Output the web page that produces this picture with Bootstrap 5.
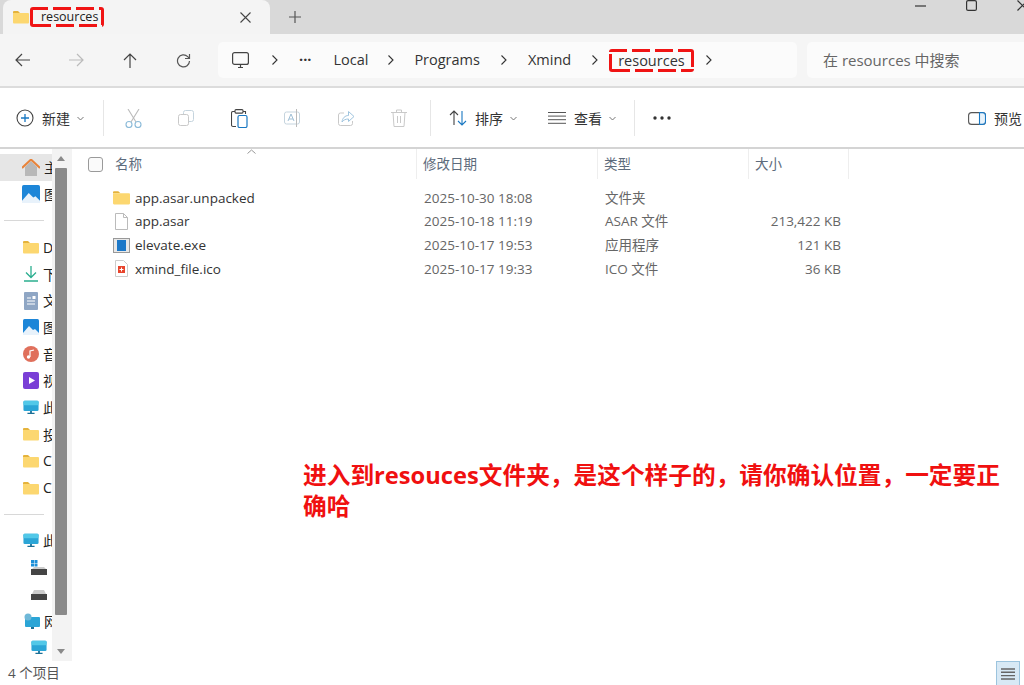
<!DOCTYPE html>
<html lang="zh">
<head>
  <meta charset="UTF-8">
  <title>resources</title>
  <link href="https://cdn.jsdelivr.net/npm/bootstrap@5.3.0/dist/css/bootstrap.min.css" rel="stylesheet">
  <style>
    html, body { height: 685px; overflow: hidden; }
    body { font-family: "Open Sans", "Noto Sans CJK SC", sans-serif; font-size: 13.5px; color: #333; background: #fff; width: 1024px; position: relative; }
    svg { display: block; flex: none; }
    .red-dash {
      background:
        repeating-linear-gradient(90deg, #f01414 0 18px, transparent 18px 23px) top left / 100% 3px no-repeat,
        repeating-linear-gradient(90deg, #f01414 0 18px, transparent 18px 23px) bottom left 3px / 100% 3px no-repeat,
        repeating-linear-gradient(0deg, #f01414 0 18px, transparent 18px 23px) top left / 3px 100% no-repeat,
        repeating-linear-gradient(180deg, #f01414 0 18px, transparent 18px 23px) top right / 3px 100% no-repeat;
      border-radius: 3px;
    }
    .tab-strip { height: 34px; background: #d9d9d9; padding-left: 3px; }
    .file-tab { width: 267px; height: 34px; background: #f4f4f4; border-radius: 8px 8px 0 0; padding: 0 19px 0 10px; }
    .tab-label { font-size: 12.5px; color: #222; height: 20px; line-height: 20px; padding: 0 6px 0 11px; margin-left: 1px; }
    .plus-btn { margin-left: 19px; }
    .win-btns { margin-left: auto; gap: 40px; height: 11px; margin-right: -4px; }
    .addr-row { height: 54px; background: #f5f5f5; border-bottom: 2px solid #dcdcdc; padding-left: 15px; }
    .nav-btns { gap: 39px; width: 203px; flex: none; }
    .addr-box { width: 579px; height: 36px; flex: none; background: #fbfbfb; border-radius: 5px; padding-left: 14px; font-size: 14.5px; color: #333; }
    .crumb-gap { margin: 0 21px; }
    .crumb-first { margin: 0 21px 0 23px; }
    .crumb-tight { margin: 0 20px; }
    .dots-txt { margin-right: 22px; }
    .red-crumb { padding: 0 9px; line-height: 23px; height: 23px; margin-left: -10px; margin-right: -9px; }
    .search-box { width: 217px; height: 36px; flex: none; margin-left: 10px; background: #fbfbfb; border-radius: 5px 0 0 5px; padding-left: 16px; font-size: 15px; color: #666; }
    .tool-row { height: 61px; background: #fff; border-bottom: 2px solid #d4d4d4; padding: 1px 0 0 16px; }
    .tool-txt { font-size: 14px; color: #333; }
    .tool-sep { width: 1px; height: 36px; background: #e6e6e6; }
    .muted-tools { gap: 36px; padding: 0 23px 0 21px; }
    .chev { margin-left: 7px; }
    .new-btn { width: 87px; }
    .sort-btn { width: 84px; margin-left: 18px; }
    .view-menu { width: 86px; margin-left: 15px; }
    .more-btn { margin-left: 18px; }
    .preview-btn { margin-left: auto; width: 56px; overflow: hidden; white-space: nowrap; }
    .body-row { height: 512px; }
    .side-wrap { width: 73px; background: #fff; }
    .side-list { width: 52px; overflow: hidden; padding-top: 5px; }
    .side-item { height: 26.7px; padding-left: 22px; white-space: nowrap; font-size: 14px; color: #222; gap: 4px; }
    .side-item.on { background: #e6e6e6; }
    .side-item.sub { padding-left: 31px; }
    .side-item.indent { padding-left: 23px; }
    .side-line { height: 26.7px; padding-left: 4px; }
    .side-line div { width: 40px; height: 1px; background: #d8d8d8; }
    .bar-track { width: 20px; background: #f3f3f3; padding: 0 5px 0 3px; }
    .bar-thumb { background: #8a8a8a; height: 447px; border-radius: 1px; }
    .bar-arrow { height: 19px; }
    .files { flex: 1; position: relative; }
    .col-name { width: 344px; }
    .col-date { width: 181px; }
    .col-type { width: 151px; }
    .col-size { width: 100px; }
    .head-row { height: 30px; color: #5d6b7c; font-size: 13.5px; }
    .head-row > div { height: 30px; padding-left: 6px; border-right: 1px solid #eee; line-height: 31px; }
    .head-row > .col-name { padding-left: 15px; gap: 12px; display: flex; align-items: center; }
    .check-box { width: 15px; height: 15px; border: 1px solid #9a9a9a; border-radius: 3px; background: #fafafa; }
    .sort-mark { position: absolute; left: 174px; top: 0; }
    .file-list { padding-top: 7px; }
    .file-row { height: 23.7px; color: #666; }
    .file-row .col-name { color: #333; padding-left: 40px; gap: 5px; }
    .file-row .col-date { padding-left: 7px; }
    .file-row .col-type { padding-left: 7px; }
    .file-row .col-size { text-align: right; padding-right: 8px; }
    .note { position: absolute; left: 303px; top: 460px; width: 705px; color: #f01010; font-weight: 700; font-size: 23.7px; line-height: 31px; }
    .status-row { height: 25px; padding-left: 8px; color: #555; font-size: 13.5px; }
    .view-btn { margin-left: auto; margin-right: 4px; width: 24px; height: 26px; background: #d8e9f5; border: 1px solid #9cc4de; }
  </style>
</head>
<body>

<svg width="0" height="0" class="position-absolute">
  <defs>
    <symbol id="folder" viewBox="0 0 16 14">
      <path d="M0 2a1 1 0 0 1 1-1h4l2 2H0z" fill="#e5b33c"/>
      <path d="M0 3h15a1 1 0 0 1 1 1v8.500a1 1 0 0 1-1 1H1a1 1 0 0 1-1-1z" fill="#fcd770"/>
    </symbol>
    <symbol id="monitor" viewBox="0 0 18 16">
      <rect x="0.500" y="0.500" width="17" height="11.500" rx="1.500" fill="#2ba5d6"/>
      <rect x="0.500" y="0.500" width="17" height="5" rx="1.500" fill="#52c8e8"/>
      <path d="M8 12h2v2H8zM5 14h8v1.200H5z" fill="#1b6f96"/>
    </symbol>
    <symbol id="picture" viewBox="0 0 16 16">
      <rect width="16" height="16" rx="1.500" fill="#1d86d8"/>
      <path d="M0 14l6-7 4 4 2-1 4 4v2H0z" fill="#e8f2fb"/>
    </symbol>
  </defs>
</svg>

<div class="tab-strip d-flex align-items-start">
  <div class="file-tab d-flex align-items-center">
    <svg width="16" height="14"><use href="#folder"/></svg>
    <span class="tab-label red-dash">resources</span>
    <svg class="ms-auto" width="11" height="11" viewBox="0 0 11 11"><path d="M.5.500l10 10M10.500.500l-10 10" stroke="#444" stroke-width="1.100"/></svg>
  </div>
  <svg class="plus-btn align-self-center" width="12" height="12" viewBox="0 0 12 12"><path d="M6 0v12M0 6h12" stroke="#555" stroke-width="1.200"/></svg>
  <div class="win-btns d-flex align-items-center">
    <svg width="11" height="2" viewBox="0 0 11 2"><path d="M0 1h11" stroke="#333" stroke-width="1.200"/></svg>
    <svg width="11" height="11" viewBox="0 0 11 11"><rect x=".6" y=".6" width="9.800" height="9.800" rx="1.500" fill="none" stroke="#333" stroke-width="1.200"/></svg>
    <svg width="11" height="11" viewBox="0 0 11 11"><path d="M.5.500l10 10M10.500.500l-10 10" stroke="#333" stroke-width="1.200"/></svg>
  </div>
</div>

<div class="addr-row d-flex align-items-center">
  <div class="nav-btns d-flex align-items-center">
    <svg width="15" height="14" viewBox="0 0 15 14"><path d="M15 7H1M7 1L1 7l6 6" fill="none" stroke="#444" stroke-width="1.200"/></svg>
    <svg width="15" height="14" viewBox="0 0 15 14"><path d="M0 7h14M8 1l6 6-6 6" fill="none" stroke="#bbb" stroke-width="1.200"/></svg>
    <svg width="14" height="15" viewBox="0 0 14 15"><path d="M7 15V1M1 7l6-6 6 6" fill="none" stroke="#444" stroke-width="1.200"/></svg>
    <svg width="15" height="15" viewBox="0 0 15 15"><path d="M13.500 8a6 6 0 1 1-1.800-4.400L13.500 5.500M13.500 1v4.500H9" fill="none" stroke="#555" stroke-width="1.200"/></svg>
  </div>
  <div class="addr-box d-flex align-items-center">
    <svg width="17" height="17" viewBox="0 0 17 17"><rect x=".6" y=".6" width="15.800" height="11.800" rx="2" fill="none" stroke="#444" stroke-width="1.200"/><path d="M6 15.500h5M8.500 12.500v3" stroke="#444" stroke-width="1.200"/></svg>
    <svg class="crumb-first" width="6" height="10" viewBox="0 0 6 10"><path d="M.5.500L5 5 .5 9.500" fill="none" stroke="#333" stroke-width="1.100"/></svg>
    <span class="dots-txt lh-1 fw-bold">···</span>
    <span>Local</span>
    <svg class="crumb-tight" width="6" height="10" viewBox="0 0 6 10"><path d="M.5.500L5 5 .5 9.500" fill="none" stroke="#333" stroke-width="1.100"/></svg>
    <span>Programs</span>
    <svg class="crumb-gap" width="6" height="10" viewBox="0 0 6 10"><path d="M.5.500L5 5 .5 9.500" fill="none" stroke="#333" stroke-width="1.100"/></svg>
    <span>Xmind</span>
    <svg class="crumb-gap" width="6" height="10" viewBox="0 0 6 10"><path d="M.5.500L5 5 .5 9.500" fill="none" stroke="#333" stroke-width="1.100"/></svg>
    <span class="red-crumb red-dash">resources</span>
    <svg class="crumb-gap" width="6" height="10" viewBox="0 0 6 10"><path d="M.5.500L5 5 .5 9.500" fill="none" stroke="#333" stroke-width="1.100"/></svg>
  </div>
  <div class="search-box d-flex align-items-center">在 resources 中搜索</div>
</div>

<div class="tool-row d-flex align-items-center">
  <div class="new-btn d-flex align-items-center">
    <svg width="18" height="18" viewBox="0 0 18 18"><circle cx="9" cy="9" r="8" fill="none" stroke="#444" stroke-width="1.100"/><path d="M9 5v8M5 9h8" stroke="#1a78c2" stroke-width="1.300"/></svg>
    <span class="tool-txt ms-2">新建</span>
    <svg class="chev" width="7" height="5" viewBox="0 0 7 5"><path d="M.5 1L3.500 4 6.500 1" fill="none" stroke="#777"/></svg>
  </div>
  <div class="tool-sep"></div>
  <div class="muted-tools d-flex align-items-center">
    <svg width="17" height="19" viewBox="0 0 17 19"><path d="M3 0l8 13M14 0L6 13" stroke="#bbb" stroke-width="1.100"/><circle cx="4" cy="15.500" r="3" fill="none" stroke="#8cbbd9" stroke-width="1.100"/><circle cx="13" cy="15.500" r="3" fill="none" stroke="#8cbbd9" stroke-width="1.100"/></svg>
    <svg width="17" height="16" viewBox="0 0 17 16"><rect x="5.500" y=".5" width="10" height="11" rx="2" fill="none" stroke="#c5d4de"/><rect x=".5" y="4.500" width="10" height="11" rx="2" fill="#fff" stroke="#c9c9c9"/></svg>
    <svg width="17" height="19" viewBox="0 0 17 19"><path d="M5 2.500H2a1.500 1.500 0 0 0-1.500 1.500v12A1.500 1.500 0 0 0 2 17.500h3" fill="none" stroke="#444" stroke-width="1.100"/><rect x="4" y=".6" width="8" height="3.500" rx="1" fill="#fff" stroke="#444" stroke-width="1.100"/><rect x="7" y="6.500" width="9" height="12" rx="1.500" fill="#fff" stroke="#1a78c2" stroke-width="1.200"/><path d="M12 2.500h2.500V5" fill="none" stroke="#444" stroke-width="1.100"/></svg>
    <svg width="18" height="18" viewBox="0 0 18 18"><rect x=".5" y="3" width="15" height="12" rx="2" fill="none" stroke="#c5d4de"/><path d="M4 12l3-7 3 7M5 10h4" fill="none" stroke="#9fbfd6"/><path d="M12.500 0v18" stroke="#bbb"/></svg>
    <svg width="17" height="15" viewBox="0 0 17 15"><path d="M6 2H2.500A2 2 0 0 0 .5 4v8.500a2 2 0 0 0 2 2h10a2 2 0 0 0 2-2V10" fill="none" stroke="#c9c9c9"/><path d="M10.500.5L16 5.500l-5.500 5V8C7.500 8 5.500 9 4 11c.5-4 3-6.500 6.500-6.500z" fill="none" stroke="#9fc4de"/></svg>
    <svg width="16" height="18" viewBox="0 0 16 18"><path d="M0 3.500h16M5.500 3.500V1h5v2.500M2 3.500l1 14h10l1-14M6.500 7v7M9.500 7v7" fill="none" stroke="#c9c9c9"/></svg>
  </div>
  <div class="tool-sep"></div>
  <div class="sort-btn d-flex align-items-center">
    <svg width="18" height="16" viewBox="0 0 18 16"><path d="M5 15V1M1 5l4-4 4 4" fill="none" stroke="#444" stroke-width="1.100"/><path d="M13 1v14M9 11l4 4 4-4" fill="none" stroke="#1a78c2" stroke-width="1.100"/></svg>
    <span class="tool-txt ms-2">排序</span>
    <svg class="chev" width="7" height="5" viewBox="0 0 7 5"><path d="M.5 1L3.500 4 6.500 1" fill="none" stroke="#777"/></svg>
  </div>
  <div class="view-menu d-flex align-items-center">
    <svg width="18" height="12" viewBox="0 0 18 12"><path d="M0 .5h18M0 4.100h18M0 7.700h18M0 11.300h18" stroke="#555"/></svg>
    <span class="tool-txt ms-2">查看</span>
    <svg class="chev" width="7" height="5" viewBox="0 0 7 5"><path d="M.5 1L3.500 4 6.500 1" fill="none" stroke="#777"/></svg>
  </div>
  <div class="tool-sep"></div>
  <svg class="more-btn" width="18" height="4" viewBox="0 0 18 4"><circle cx="2" cy="2" r="1.700" fill="#333"/><circle cx="9" cy="2" r="1.700" fill="#333"/><circle cx="16" cy="2" r="1.700" fill="#333"/></svg>
  <div class="preview-btn d-flex align-items-center">
    <svg width="18" height="13" viewBox="0 0 18 13"><rect x=".6" y=".6" width="16.800" height="11.800" rx="3" fill="none" stroke="#555" stroke-width="1.100"/><path d="M11.500.6h3a3 3 0 0 1 3 3v5.800a3 3 0 0 1-3 3h-3z" fill="#e8f3fb" stroke="#1a78c2" stroke-width="1.100"/></svg>
    <span class="tool-txt ms-2">预览</span>
  </div>
</div>

<div class="body-row d-flex">
  <div class="side-wrap d-flex flex-none">
    <div class="side-list">
      <div class="side-item on d-flex align-items-center"><svg width="18" height="17" viewBox="0 0 18 17"><path d="M3 8v9h12V8L9 2z" fill="#b8b8b8"/><path d="M0 9l9-8.500L18 9" fill="none" stroke="#e8833a" stroke-width="2"/></svg><span>主</span></div>
      <div class="side-item d-flex align-items-center"><svg width="18" height="18"><use href="#picture"/></svg><span>图</span></div>
      <div class="side-line d-flex align-items-center"><div></div></div>
      <div class="side-item indent d-flex align-items-center"><svg width="16" height="14"><use href="#folder"/></svg><span>D</span></div>
      <div class="side-item indent d-flex align-items-center"><svg width="16" height="16" viewBox="0 0 16 16"><path d="M8 0v11M3 6.500l5 5 5-5M1 15h14" fill="none" stroke="#2bae8f" stroke-width="1.300"/></svg><span>下</span></div>
      <div class="side-item indent d-flex align-items-center"><svg width="16" height="18" viewBox="0 0 14 18"><rect width="14" height="18" rx="1" fill="#8fa6c4"/><path d="M3 6h4M3 9h8M3 12h8" stroke="#fff"/><rect x="8.500" y="4" width="3" height="3" fill="#fff"/></svg><span>文</span></div>
      <div class="side-item indent d-flex align-items-center"><svg width="16" height="16"><use href="#picture"/></svg><span>图</span></div>
      <div class="side-item indent d-flex align-items-center"><svg width="16" height="16" viewBox="0 0 16 16"><circle cx="8" cy="8" r="8" fill="#e0705c"/><path d="M7 11V5l4-1" fill="none" stroke="#fff" stroke-width="1.200"/><circle cx="5.500" cy="11" r="1.700" fill="#fff"/></svg><span>音</span></div>
      <div class="side-item indent d-flex align-items-center"><svg width="16" height="17" viewBox="0 0 16 17"><rect width="16" height="17" rx="2" fill="#7a3fd6"/><path d="M6 5l6 3.500L6 12z" fill="#fff"/></svg><span>视</span></div>
      <div class="side-item indent d-flex align-items-center"><svg width="16" height="15"><use href="#monitor"/></svg><span>此</span></div>
      <div class="side-item indent d-flex align-items-center"><svg width="16" height="14"><use href="#folder"/></svg><span>投</span></div>
      <div class="side-item indent d-flex align-items-center"><svg width="16" height="14"><use href="#folder"/></svg><span>C</span></div>
      <div class="side-item indent d-flex align-items-center"><svg width="16" height="14"><use href="#folder"/></svg><span>C</span></div>
      <div class="side-line d-flex align-items-center"><div></div></div>
      <div class="side-item indent d-flex align-items-center"><svg width="16" height="15"><use href="#monitor"/></svg><span>此</span></div>
      <div class="side-item sub d-flex align-items-center"><svg width="16" height="15" viewBox="0 0 16 15"><path d="M0 0h3v3H0zM3.500 0h3v3h-3zM0 3.500h3v3H0zM3.500 3.500h3v3h-3z" fill="#1c8fd8"/><rect y="9" width="16" height="6" fill="#444"/><path d="M1 9l2-2h10l2 2z" fill="#ccc"/></svg></div>
      <div class="side-item sub d-flex align-items-center"><svg width="16" height="11" viewBox="0 0 16 11"><rect y="5" width="16" height="6" fill="#444"/><path d="M1 5l2-4h10l2 4z" fill="#ccc"/></svg></div>
      <div class="side-item indent d-flex align-items-center"><svg width="17" height="17" viewBox="0 0 17 17"><rect x="2" y="4" width="15" height="10" rx="1" fill="#2ba5d6"/><circle cx="5" cy="4" r="3.500" fill="#6fb8d8"/><path d="M8 14h3v2H8z" fill="#1b6f96"/></svg><span>网</span></div>
      <div class="side-item sub d-flex align-items-center"><svg width="16" height="15"><use href="#monitor"/></svg></div>
    </div>
    <div class="bar-track d-flex flex-column">
      <div class="bar-arrow d-flex align-items-center justify-content-center"><svg width="8" height="5" viewBox="0 0 8 5"><path d="M4 0l4 5H0z" fill="#8a8a8a"/></svg></div>
      <div class="bar-thumb"></div>
      <div class="bar-arrow d-flex align-items-center justify-content-center mt-auto"><svg width="8" height="5" viewBox="0 0 8 5"><path d="M0 0h8L4 5z" fill="#8a8a8a"/></svg></div>
    </div>
  </div>

  <div class="files">
    <svg class="sort-mark" width="9" height="5" viewBox="0 0 9 5"><path d="M.5 4.500l4-3.500 4 3.500" fill="none" stroke="#999"/></svg>
    <div class="head-row d-flex">
      <div class="col-name"><span class="check-box"></span><span>名称</span></div>
      <div class="col-date">修改日期</div>
      <div class="col-type">类型</div>
      <div class="col-size">大小</div>
    </div>
    <div class="file-list">
      <div class="file-row d-flex align-items-center">
        <div class="col-name d-flex align-items-center"><svg width="17" height="15"><use href="#folder"/></svg><span>app.asar.unpacked</span></div>
        <div class="col-date">2025-10-30 18:08</div><div class="col-type">文件夹</div><div class="col-size"></div>
      </div>
      <div class="file-row d-flex align-items-center">
        <div class="col-name d-flex align-items-center"><svg width="17" height="17" viewBox="0 0 17 17"><path d="M2.500.5h8l4 4v12h-12z" fill="#fff" stroke="#bbb"/><path d="M10.500.5v4h4" fill="none" stroke="#bbb"/></svg><span>app.asar</span></div>
        <div class="col-date">2025-10-18 11:19</div><div class="col-type">ASAR 文件</div><div class="col-size">213,422 KB</div>
      </div>
      <div class="file-row d-flex align-items-center">
        <div class="col-name d-flex align-items-center"><svg width="17" height="15" viewBox="0 0 17 15"><rect x=".5" y=".5" width="16" height="14" fill="#e8e8e8" stroke="#999"/><rect x="4" y="2" width="9" height="11" fill="#1c78c8"/></svg><span>elevate.exe</span></div>
        <div class="col-date">2025-10-17 19:53</div><div class="col-type">应用程序</div><div class="col-size">121 KB</div>
      </div>
      <div class="file-row d-flex align-items-center">
        <div class="col-name d-flex align-items-center"><svg width="17" height="17" viewBox="0 0 17 17"><path d="M2.500.5h8l4 4v12h-12z" fill="#fff" stroke="#ccc"/><rect x="5" y="6" width="7" height="7" fill="#e8442c"/><path d="M8.500 7.500v4M6.500 9.500h4" stroke="#fff"/></svg><span>xmind_file.ico</span></div>
        <div class="col-date">2025-10-17 19:33</div><div class="col-type">ICO 文件</div><div class="col-size">36 KB</div>
      </div>
    </div>
  </div>
</div>

<div class="status-row d-flex align-items-center">
  <span>4 个项目</span>
  <div class="view-btn d-flex align-items-center justify-content-center">
    <svg width="14" height="12" viewBox="0 0 14 12"><path d="M0 1h14M0 4.300h14M0 7.600h14M0 11h14" stroke="#666" stroke-width="1.400"/></svg>
  </div>
</div>

<div class="note">进入到resouces文件夹，是这个样子的，请你确认位置，一定要正确哈</div>

</body>
</html>
